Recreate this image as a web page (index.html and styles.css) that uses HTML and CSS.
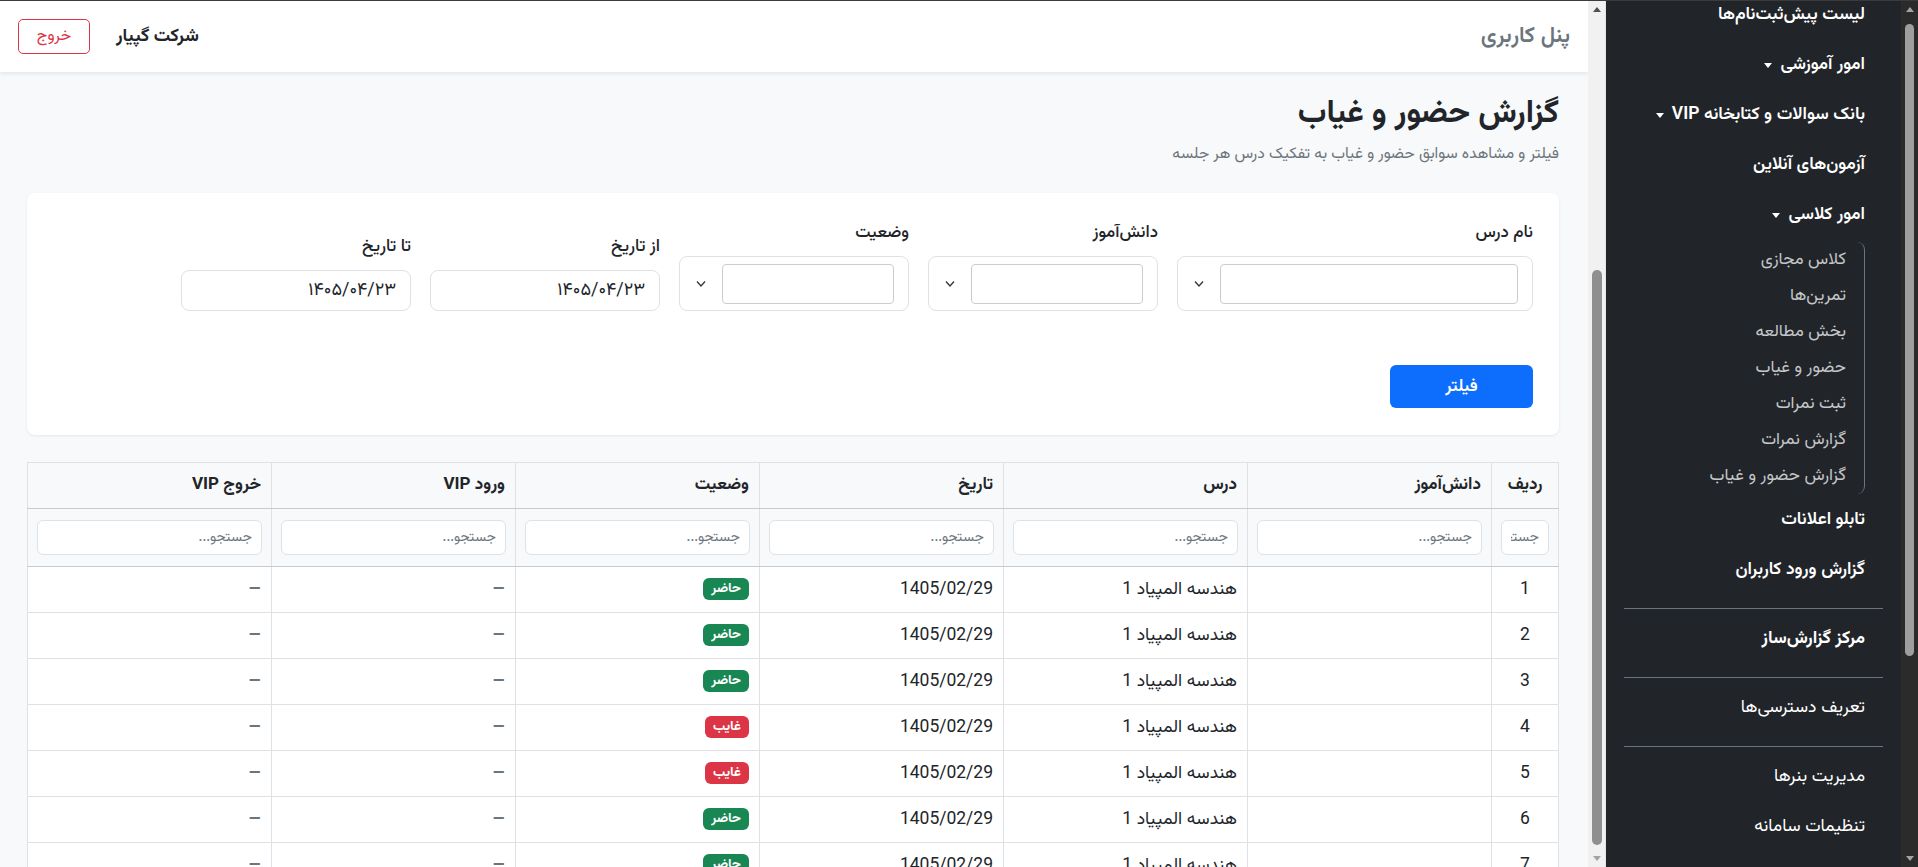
FILE: index.html
```html
<!DOCTYPE html>
<html lang="fa" dir="rtl">
<head>
<meta charset="utf-8">
<title>گزارش حضور و غیاب</title>
<link rel="stylesheet" href="styles.css">
</head>
<body>
<div class="app">
  <aside class="sidebar">
    <div class="vscroll vscroll-dark">
      <div class="vs-arrow vs-up"></div>
      <div class="vs-track"><div class="vs-thumb"></div></div>
      <div class="vs-arrow vs-down"></div>
    </div>
    <div class="side-viewport">
      <nav class="side-nav">
        <a class="side-link strong">لیست پیش‌ثبت‌نام‌ها</a>
        <a class="side-link strong caret">امور آموزشی</a>
        <a class="side-link strong caret">بانک سوالات و کتابخانه VIP</a>
        <a class="side-link strong">آزمون‌های آنلاین</a>
        <a class="side-link strong caret">امور کلاسی</a>
        <div class="submenu">
          <a class="sub-link">کلاس مجازی</a>
          <a class="sub-link">تمرین‌ها</a>
          <a class="sub-link">بخش مطالعه</a>
          <a class="sub-link">حضور و غیاب</a>
          <a class="sub-link">ثبت نمرات</a>
          <a class="sub-link">گزارش نمرات</a>
          <a class="sub-link">گزارش حضور و غیاب</a>
        </div>
        <a class="side-link strong">تابلو اعلانات</a>
        <a class="side-link strong">گزارش ورود کاربران</a>
        <hr class="side-hr">
        <a class="side-link bold">مرکز گزارش‌ساز</a>
        <hr class="side-hr">
        <a class="side-link">تعریف دسترسی‌ها</a>
        <hr class="side-hr">
        <a class="side-link">مدیریت بنرها</a>
        <a class="side-link">تنظیمات سامانه</a>
      </nav>
    </div>
  </aside>

  <div class="vscroll vscroll-light">
    <div class="vs-arrow vs-up"></div>
    <div class="vs-track"><div class="vs-thumb"></div></div>
    <div class="vs-arrow vs-down"></div>
  </div>

  <div class="main">
    <header class="topbar">
      <div class="panel-title">پنل کاربری</div>
      <div class="topbar-left">
        <div class="company">شرکت گپیار</div>
        <button class="btn-logout" type="button">خروج</button>
      </div>
    </header>

    <div class="content">
      <h1 class="page-title">گزارش حضور و غیاب</h1>
      <p class="page-sub">فیلتر و مشاهده سوابق حضور و غیاب به تفکیک درس هر جلسه</p>

      <section class="filter-card">
        <div class="filter-grid">
          <div class="field">
            <label class="field-label">نام درس</label>
            <div class="combo">
              <input class="combo-input" type="text">
              <svg class="chev" width="12" height="8" viewBox="0 0 12 8"><path d="M2 1.5 L6 6 L10 1.5" fill="none" stroke="#343a40" stroke-width="1.4"/></svg>
            </div>
          </div>
          <div class="field">
            <label class="field-label">دانش‌آموز</label>
            <div class="combo">
              <input class="combo-input" type="text">
              <svg class="chev" width="12" height="8" viewBox="0 0 12 8"><path d="M2 1.5 L6 6 L10 1.5" fill="none" stroke="#343a40" stroke-width="1.4"/></svg>
            </div>
          </div>
          <div class="field">
            <label class="field-label">وضعیت</label>
            <div class="combo">
              <input class="combo-input" type="text">
              <svg class="chev" width="12" height="8" viewBox="0 0 12 8"><path d="M2 1.5 L6 6 L10 1.5" fill="none" stroke="#343a40" stroke-width="1.4"/></svg>
            </div>
          </div>
          <div class="field">
            <label class="field-label">از تاریخ</label>
            <input class="date-input" type="text" value="۱۴۰۵/۰۴/۲۳">
          </div>
          <div class="field">
            <label class="field-label">تا تاریخ</label>
            <input class="date-input" type="text" value="۱۴۰۵/۰۴/۲۳">
          </div>
        </div>
        <button class="btn-filter" type="button">فیلتر</button>
      </section>

      <table class="report">
        <colgroup>
          <col class="c-idx"><col><col><col><col><col><col>
        </colgroup>
        <thead>
          <tr class="head-row">
            <th class="center">ردیف</th>
            <th>دانش‌آموز</th>
            <th>درس</th>
            <th>تاریخ</th>
            <th>وضعیت</th>
            <th>ورود VIP</th>
            <th>خروج VIP</th>
          </tr>
          <tr class="search-row">
            <th><input class="search" placeholder="جستجو..."></th>
            <th><input class="search" placeholder="جستجو..."></th>
            <th><input class="search" placeholder="جستجو..."></th>
            <th><input class="search" placeholder="جستجو..."></th>
            <th><input class="search" placeholder="جستجو..."></th>
            <th><input class="search" placeholder="جستجو..."></th>
            <th><input class="search" placeholder="جستجو..."></th>
          </tr>
        </thead>
        <tbody>
          <tr><td class="center">1</td><td></td><td>هندسه المپیاد 1</td><td>1405/02/29</td><td><span class="badge ok">حاضر</span></td><td><span class="dash">–</span></td><td><span class="dash">–</span></td></tr>
          <tr><td class="center">2</td><td></td><td>هندسه المپیاد 1</td><td>1405/02/29</td><td><span class="badge ok">حاضر</span></td><td><span class="dash">–</span></td><td><span class="dash">–</span></td></tr>
          <tr><td class="center">3</td><td></td><td>هندسه المپیاد 1</td><td>1405/02/29</td><td><span class="badge ok">حاضر</span></td><td><span class="dash">–</span></td><td><span class="dash">–</span></td></tr>
          <tr><td class="center">4</td><td></td><td>هندسه المپیاد 1</td><td>1405/02/29</td><td><span class="badge no">غایب</span></td><td><span class="dash">–</span></td><td><span class="dash">–</span></td></tr>
          <tr><td class="center">5</td><td></td><td>هندسه المپیاد 1</td><td>1405/02/29</td><td><span class="badge no">غایب</span></td><td><span class="dash">–</span></td><td><span class="dash">–</span></td></tr>
          <tr><td class="center">6</td><td></td><td>هندسه المپیاد 1</td><td>1405/02/29</td><td><span class="badge ok">حاضر</span></td><td><span class="dash">–</span></td><td><span class="dash">–</span></td></tr>
          <tr><td class="center">7</td><td></td><td>هندسه المپیاد 1</td><td>1405/02/29</td><td><span class="badge ok">حاضر</span></td><td><span class="dash">–</span></td><td><span class="dash">–</span></td></tr>
          <tr><td class="center">8</td><td></td><td>هندسه المپیاد 1</td><td>1405/02/29</td><td><span class="badge ok">حاضر</span></td><td><span class="dash">–</span></td><td><span class="dash">–</span></td></tr>
        </tbody>
      </table>
    </div>
  </div>
</div>
</body>
</html>
```
FILE: styles.css
```css
* { box-sizing: border-box; }
html, body { margin: 0; padding: 0; height: 100%; }
body {
  font-family: "Vazirmatn", "Noto Sans Arabic", "DejaVu Sans", sans-serif;
  color: #212529;
  background: #f8f9fa;
  overflow: hidden;
}
.app {
  display: flex;
  height: 867px;
  border-top: 1px solid #3b3b3b;
  overflow: hidden;
}

/* ---------- sidebar ---------- */
.sidebar {
  width: 312px;
  flex: 0 0 312px;
  background: #212529;
  display: flex;
}
.side-viewport {
  flex: 1;
  overflow: hidden;
}
.side-nav {
  display: flex;
  flex-direction: column;
  margin-top: -11px;
}
.side-link {
  display: flex;
  align-items: center;
  gap: 8px;
  padding: 13px 36px 13px 18px;
  line-height: 24px;
  font-size: 17.5px;
  color: #ffffff;
  text-decoration: none;
  white-space: nowrap;
}
.side-link.strong { font-weight: 600; }
.side-link.bold { font-weight: 700; }
.side-link.caret::after {
  content: "";
  display: inline-block;
  border-top: 5px solid #fff;
  border-left: 4.5px solid transparent;
  border-right: 4.5px solid transparent;
}
.submenu {
  display: flex;
  flex-direction: column;
  margin: 2px 36px 1px 0;
  border-right: 1px solid #6c757d;
  border-radius: 0 8px 8px 0;
}
.sub-link {
  display: block;
  padding: 6px 18px 6px 10px;
  line-height: 24px;
  font-size: 17px;
  color: #c5c7c9;
  white-space: nowrap;
}
.side-hr {
  border: 0;
  border-top: 1px solid #6c757d;
  margin: 13px 18px 5px;
  opacity: 1;
}

/* ---------- fake scrollbars ---------- */
.vscroll {
  width: 17px;
  flex: 0 0 17px;
  display: flex;
  flex-direction: column;
}
.vscroll-dark { background: #2b2b2b; }
.vscroll-light {
  width: 18px;
  flex: 0 0 18px;
  background: #f1f1f1;
  border-right: 1px solid #e4e4e4;
}
.vs-arrow {
  height: 17px;
  flex: 0 0 17px;
  display: flex;
  align-items: center;
  justify-content: center;
}
.vs-up::before, .vs-down::before {
  content: "";
  width: 0; height: 0;
  border-left: 4px solid transparent;
  border-right: 4px solid transparent;
}
.vs-up::before { border-bottom: 5px solid #a3a3a3; }
.vs-down::before { border-top: 5px solid #a3a3a3; }
.vscroll-light .vs-up::before { border-bottom-color: #505050; }
.vs-track { flex: 1; display: flex; flex-direction: column; align-items: center; }
.vs-thumb { width: 9px; border-radius: 5px; }
.vscroll-dark .vs-thumb { margin-top: 6px; height: 632px; background: #9f9f9f; }
.vscroll-light .vs-thumb { margin-top: 252px; height: 575px; background: #8f8f8f; width: 10px; }

/* ---------- main ---------- */
.main {
  flex: 1;
  min-width: 0;
  display: flex;
  flex-direction: column;
  background: #f8f9fa;
  overflow: hidden;
}
.topbar {
  height: 71px;
  flex: 0 0 71px;
  background: #fff;
  box-shadow: 0 2px 4px rgba(0,0,0,.08);
  display: flex;
  align-items: center;
  justify-content: space-between;
  padding: 0 18px;
  position: relative;
  z-index: 1;
}
.panel-title {
  font-size: 22px;
  font-weight: 600;
  color: #6c757d;
}
.topbar-left { display: flex; align-items: center; gap: 26px; }
.company { font-size: 18px; font-weight: 700; color: #212529; }
.btn-logout {
  font-family: inherit;
  font-size: 16px;
  color: #dc3545;
  background: #fff;
  border: 1px solid #dc3545;
  border-radius: 5px;
  width: 72px;
  height: 35px;
  padding: 0;
}

.content { padding: 23px 29px 0 27px; }
.page-title {
  margin: 0 0 9px;
  font-size: 32px;
  font-weight: 700;
  line-height: 38px;
}
.page-sub {
  margin: 0 0 27px;
  font-size: 15.7px;
  line-height: 24px;
  color: #6c757d;
}

.filter-card {
  background: #fff;
  border-radius: 8px;
  box-shadow: 0 1px 3px rgba(0,0,0,.08);
  padding: 28px 26px 27px;
}
.filter-grid {
  display: grid;
  grid-template-columns: 356px repeat(4, 230px);
  column-gap: 19px;
  align-items: end;
}
.field { display: flex; flex-direction: column; }
.field-label {
  font-size: 17px;
  font-weight: 500;
  line-height: 24px;
  margin-bottom: 11px;
}
.combo {
  display: flex;
  align-items: center;
  height: 55px;
  border: 1px solid #dee2e6;
  border-radius: 8px;
  padding: 0 14px 0 0;
}
.combo-input {
  flex: 1;
  min-width: 0;
  height: 40px;
  border: 1px solid #c9cdd1;
  border-radius: 4px;
  background: #fff;
}
.chev { flex: 0 0 42px; }
.date-input {
  height: 41px;
  border: 1px solid #dee2e6;
  border-radius: 8px;
  padding: 0 14px;
  font-family: inherit;
  font-size: 18px;
  color: #212529;
  text-align: right;
  background: #fff;
}
.btn-filter {
  display: block;
  margin-top: 54px;
  width: 143px;
  height: 43px;
  border: 0;
  border-radius: 6px;
  background: #0d6efd;
  color: #fff;
  font-family: inherit;
  font-size: 17px;
  font-weight: 600;
}

.report {
  margin-top: 27px;
  width: 100%;
  table-layout: fixed;
  border-collapse: collapse;
  background: #fff;
  border: 1px solid #dee2e6;
}
.report col.c-idx { width: 67px; }
.report th, .report td {
  border: 1px solid #dee2e6;
  text-align: right;
  padding: 10px 10px;
  line-height: 25px;
  font-size: 17.5px;
  vertical-align: middle;
}
.report tbody td { height: 46px; padding-top: 0; padding-bottom: 0; }
.report th { font-weight: 700; background: #f8f9fa; font-size: 17px; }
.report .head-row th { border-bottom: 1px solid #c8cbce; }
.report .search-row th { padding: 11px 9px; border-bottom: 1px solid #c8cbce; }
.report .center { text-align: center; }
.search {
  display: block;
  width: 100%;
  height: 35px;
  border: 1px solid #dee2e6;
  border-radius: 6px;
  padding: 0 9px;
  font-family: inherit;
  font-size: 14px;
  text-align: right;
  background: #fff;
}
.search::placeholder { color: #6c757d; }
.badge {
  display: inline-block;
  vertical-align: middle;
  padding: 3px 8px 3px;
  border-radius: 6px;
  font-size: 13.5px;
  font-weight: 700;
  line-height: 16px;
  color: #fff;
}
.badge.ok { background: #198754; }
.badge.no { background: #dc3545; }
.dash { color: #6c757d; font-weight: 700; font-size: 19px; line-height: 16px; vertical-align: middle; }
```
